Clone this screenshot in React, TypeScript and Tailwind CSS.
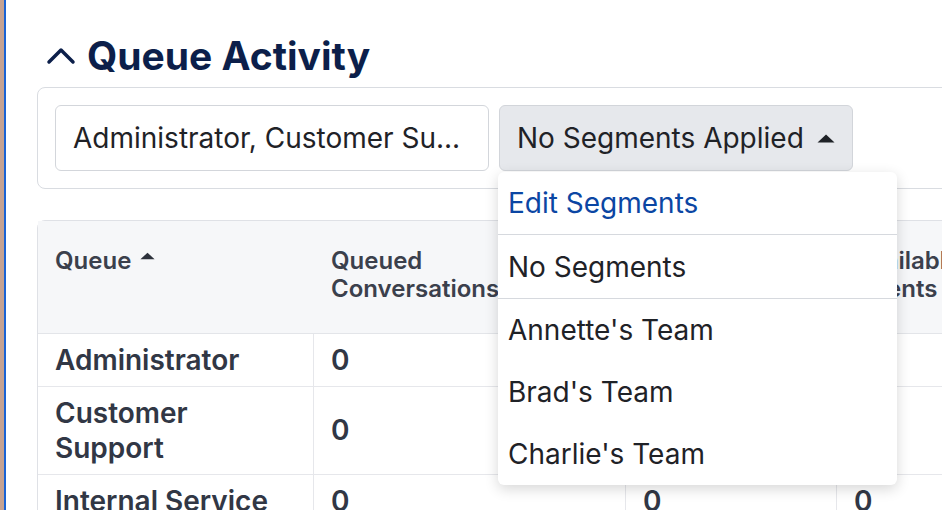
import React from 'react';

const SEGMENTS = ["Annette's Team", "Brad's Team", "Charlie's Team"];

const ROWS = [
  { name: 'Administrator', values: ['0', '0', '0'] },
  { name: 'Customer Support', values: ['0', '0', '0'] },
  { name: 'Internal Service', values: ['0', '0', '0'] },
];

// Small filled caret used in the sort header and the segment button
const CaretUp: React.FC<{ className?: string }> = ({ className }) => (
  <svg className={className} viewBox="0 0 18 9" fill="currentColor">
    <path d="M9 0.5 L17.5 8.5 L0.5 8.5 Z" />
  </svg>
);

const App: React.FC = () => {
  return (
    <div className="flex h-[510px] w-[942px] overflow-hidden bg-white font-['Inter',sans-serif]">
      {/* Left edge strips */}
      <div className="w-[4px] shrink-0 bg-[#c6a392]" />
      <div className="w-[2px] shrink-0 bg-[#1a63d4]" />

      <div className="min-w-0 flex-1 pl-[31px] pt-[33px]">
        <div className="w-[1100px]">
          {/* Heading */}
          <div className="flex h-[46px] items-center">
            <svg
              className="ml-[9px] h-[20px] w-[30px] text-[#0c1f4a]"
              viewBox="0 0 30 20"
              fill="none"
              stroke="currentColor"
              strokeWidth={3.5}
              strokeLinecap="round"
              strokeLinejoin="round"
            >
              <polyline points="3,16 15,4 27,16" />
            </svg>
            <h1 className="ml-[11px] text-[39px] font-bold leading-[46px] text-[#0c1f4a]">Queue Activity</h1>
          </div>

          {/* Filters */}
          <div className="mt-[8px] flex rounded-[8px] border border-[#d9dce1] p-[17px]">
            <div className="flex h-[66px] w-[434px] items-center rounded-[6px] border border-[#d3d6db] px-[17px] text-[28px] leading-[34px] text-[#1f2227]">
              Administrator, Customer Su...
            </div>
            <div className="relative ml-[10px]">
              <button className="flex h-[66px] w-[354px] items-center justify-between rounded-[6px] border border-[#d2d5da] bg-[#e6e8ec] pl-[17px] pr-[17px] text-[28px] leading-[34px] text-[#1f2227]">
                <span>No Segments Applied</span>
                <CaretUp className="h-[9px] w-[18px] text-[#1f2227]" />
              </button>

              {/* Segment dropdown */}
              <div className="absolute left-[-1px] top-[67px] z-10 w-[399px] overflow-hidden rounded-[6px] bg-white shadow-[0_4px_14px_rgba(0,0,0,0.16)]">
                <div className="border-b border-[#d6d9de] px-[10px] py-[10px] text-[28px] leading-[42px] text-[#0b46a3]">
                  Edit Segments
                </div>
                <div className="border-b border-[#d6d9de] px-[10px] py-[10.5px] text-[28px] leading-[42px] text-[#1f2227]">
                  No Segments
                </div>
                {SEGMENTS.map(s => (
                  <div key={s} className="px-[10px] py-[10px] text-[28px] leading-[42px] text-[#1f2227]">
                    {s}
                  </div>
                ))}
              </div>
            </div>
          </div>

          {/* Table */}
          <div className="mt-[31px] rounded-t-[8px] border border-[#dfe1e6]">
            <div className="grid h-[113px] grid-cols-[276px_313px_211px_300px] border-b border-[#e3e5e9] bg-[#f6f7f9] text-[24px] font-semibold leading-[28px] text-[#3b404c]">
              <div className="flex items-start pl-[17px] pt-[26px]">
                <span>Queue</span>
                <CaretUp className="ml-[9px] mt-[5px] h-[8px] w-[15px] text-[#2d323c]" />
              </div>
              <div className="pl-[17px] pt-[26px]">
                Queued
                <br />
                Conversations
              </div>
              <div />
              <div className="pl-[17px] pt-[26px]">
                Available
                <br />
                Agents
              </div>
            </div>

            {ROWS.map(row => (
              <div
                key={row.name}
                className="grid grid-cols-[276px_312px_211px_300px] border-b border-[#e6e7eb] text-[28px] font-semibold leading-[35px] text-[#313745]"
              >
                <div className="border-r border-[#e6e7eb] py-[8.5px] pl-[17px]">
                  {row.name === 'Customer Support' ? (
                    <>
                      Customer
                      <br />
                      Support
                    </>
                  ) : (
                    row.name
                  )}
                </div>
                <div className="flex items-center border-r border-[#e6e7eb] pl-[17px]">{row.values[0]}</div>
                <div className="flex items-center border-r border-[#e6e7eb] pl-[17px]">{row.values[1]}</div>
                <div className="flex items-center pl-[17px]">{row.values[2]}</div>
              </div>
            ))}
          </div>
        </div>
      </div>
    </div>
  );
};

export default App;
